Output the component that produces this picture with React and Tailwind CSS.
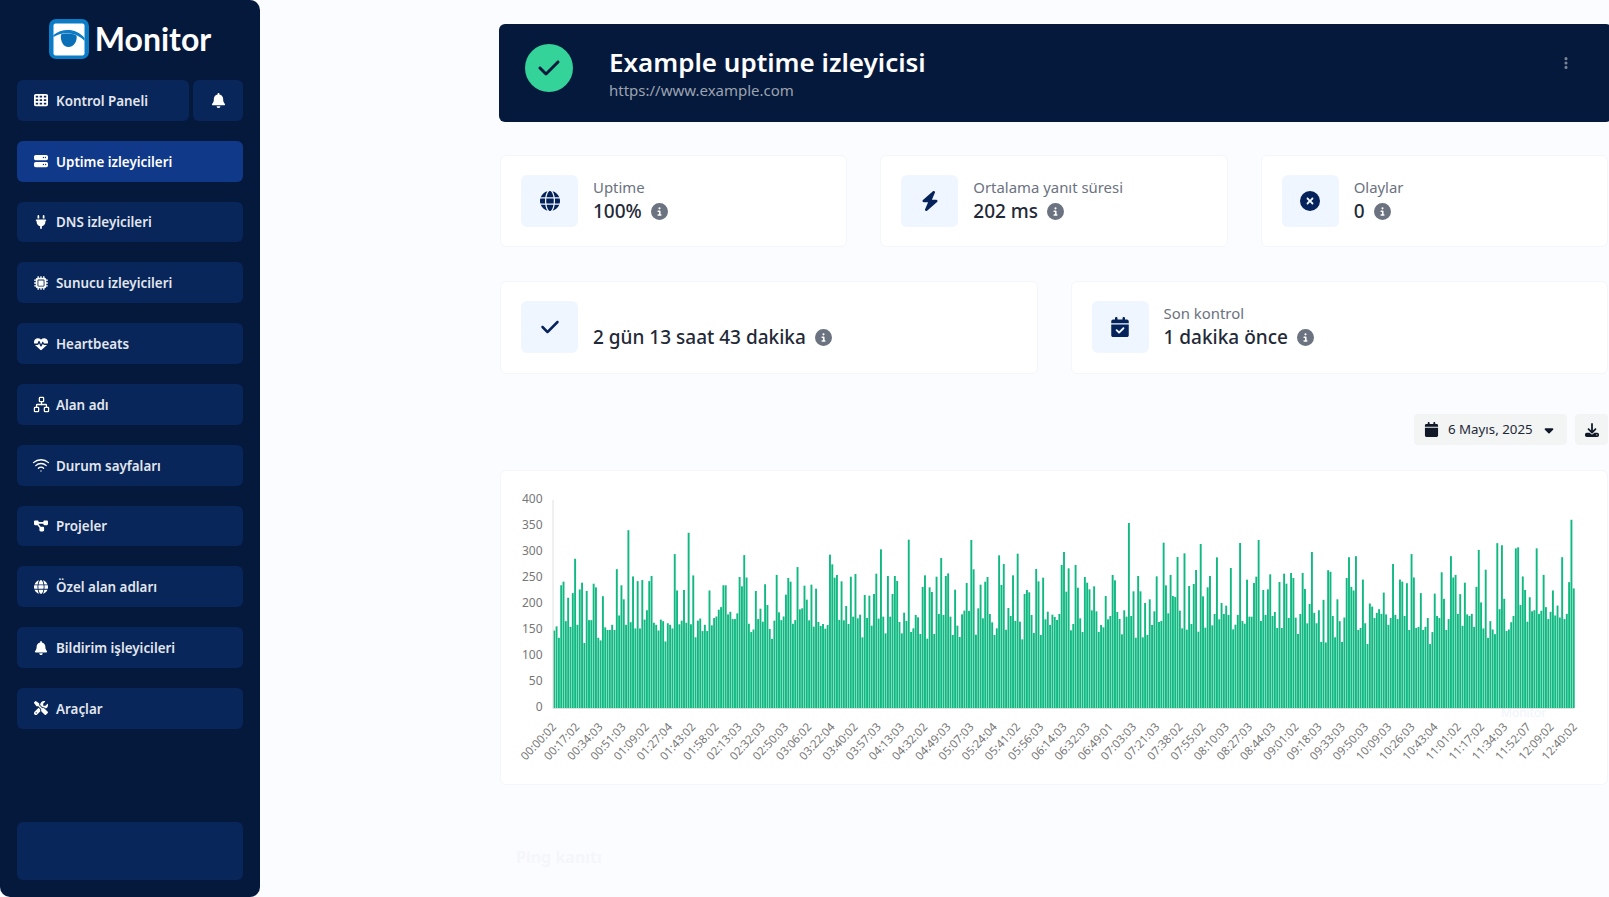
import {
  FaTableCells,
  FaBell,
  FaServer,
  FaPlug,
  FaMicrochip,
  FaHeartPulse,
  FaDiagramProject,
  FaGlobe,
  FaScrewdriverWrench,
  FaCheck,
  FaBolt,
  FaCircleXmark,
  FaCircleInfo,
  FaCalendarCheck,
  FaCalendar,
  FaCaretDown,
  FaDownload,
  FaEllipsisVertical,
} from "react-icons/fa6";
import { Network, Wifi } from "lucide-react";

const menu = [
  { label: "Uptime izleyicileri", icon: <FaServer />, active: true },
  { label: "DNS izleyicileri", icon: <FaPlug /> },
  { label: "Sunucu izleyicileri", icon: <FaMicrochip /> },
  { label: "Heartbeats", icon: <FaHeartPulse /> },
  { label: "Alan adı", icon: <Network size={17} strokeWidth={1.8} /> },
  { label: "Durum sayfaları", icon: <Wifi size={18} strokeWidth={1.7} /> },
  { label: "Projeler", icon: <FaDiagramProject /> },
  { label: "Özel alan adları", icon: <FaGlobe /> },
  { label: "Bildirim işleyicileri", icon: <FaBell /> },
  { label: "Araçlar", icon: <FaScrewdriverWrench /> },
];

const ticks = [
  "00:00:02", "00:17:02", "00:34:03", "00:51:03", "01:09:02", "01:27:04", "01:43:02", "01:58:02", "02:13:03",
  "02:32:03", "02:50:03", "03:06:02", "03:22:04", "03:40:02", "03:57:03", "04:13:03", "04:32:02", "04:49:03",
  "05:07:03", "05:24:04", "05:41:02", "05:56:03", "06:14:03", "06:32:03", "06:49:01", "07:03:03", "07:21:03",
  "07:38:02", "07:55:02", "08:10:03", "08:27:03", "08:44:03", "09:01:02", "09:18:03", "09:33:03", "09:50:03",
  "10:09:03", "10:26:03", "10:43:04", "11:01:02", "11:17:02", "11:34:03", "11:52:07", "12:09:02", "12:40:02",
];

// response times, ms
const pingsStart = [
  149, 157, 135, 236, 243, 167, 212, 156, 221, 287, 160, 228, 241, 125, 225, 169, 169, 239, 232, 135, 130, 215, 155,
  150, 150, 160, 150, 267, 178, 236, 209, 160, 342, 165, 253, 153, 244, 153, 246, 170, 188, 244, 254, 164, 160, 149,
  170, 167, 128, 163, 160, 153, 296, 226, 161, 168, 227, 164, 337, 161, 255, 136, 168, 172, 148, 160, 148, 226, 159,
  173, 176, 189, 194, 236, 236, 180, 185, 171, 171, 182, 252, 234, 294, 251, 162, 146, 151, 225, 171, 191, 166, 238,
  198, 152, 133, 168, 256, 184, 169, 176, 218, 250, 243, 162, 169, 271,
];

// middle part kept as bar tops in a 3x crop, baseline 624
const pingsMiddle = [
  328, 325, 257, 299, 361, 254, 380, 266, 366, 378, 372, 386, 375, 164, 193, 233, 225, 360, 244, 361, 318, 372, 230,
  350, 222, 355, 344, 412, 285, 354, 287, 377, 282, 221, 356, 148, 350, 400, 228, 350, 282, 228, 243, 366, 400, 338,
  363, 119, 396, 385, 345, 352, 402, 261, 226, 416, 262, 276, 402, 230, 342, 174, 345, 228, 220, 350, 405, 269, 377,
  411, 343, 332, 249, 333, 120, 208, 404, 325, 254, 355, 245, 231, 342, 367, 405, 385, 166, 255, 192, 389, 324, 348,
  226, 363, 161, 365, 418, 282, 270, 277, 345, 399, 207, 244, 405, 233, 358, 335, 375, 344, 351, 360, 342, 195, 156,
  275, 205, 391, 372, 195, 263, 355, 396, 231, 248, 268, 331, 259, 334, 396, 375, 382, 288, 358, 348, 225, 241, 336,
  357, 403, 331, 350, 69, 348, 274, 413, 228, 274, 412, 309, 405, 298, 375, 334, 229, 366, 363, 128, 256, 340, 225,
  288, 291, 171, 332, 385, 160, 389, 258, 372, 252, 210, 395, 132, 289, 383, 262, 228, 376, 342, 172, 358, 309, 342,
  317, 345, 204, 388, 374, 345, 129, 363, 371, 239, 350, 350, 249, 230, 120, 363, 270, 345, 268, 223, 348, 336, 384,
  246, 384, 221, 251, 354, 219, 234, 353, 402, 342, 219, 267, 370, 312,
].map((top) => (624 - top) / 1.56);

const pingsEnd = [
  300, 183, 163, 188, 127, 208, 126, 265, 262, 177, 136, 209, 167, 127, 174, 250, 290, 233, 226, 292, 150, 154, 247,
  163, 123, 201, 195, 173, 183, 190, 181, 222, 180, 160, 173, 277, 179, 171, 247, 243, 177, 240, 150, 296, 251, 154,
  156, 221, 150, 156, 173, 123, 146, 220, 177, 173, 261, 210, 150, 171, 292, 251, 256, 181, 219, 158, 241, 180, 177,
  181, 156, 233, 304, 203, 153, 266, 135, 167, 151, 142, 317, 190, 313, 210, 148, 151, 165, 177, 307, 309, 198, 253,
  227, 166, 213, 186, 188, 307, 181, 187, 256, 194, 171, 185, 226, 178, 197, 174, 290, 171, 181, 242, 362, 230,
];

const pings = [...pingsStart, ...pingsMiddle, ...pingsEnd];

function Logo() {
  return (
    <div className="flex items-start justify-center gap-[6px] h-[80px] pt-[19px]">
      <svg width="40" height="40" viewBox="0 0 40 40">
        <rect width="40" height="40" rx="7" fill="#0b7cc5" />
        <rect x="4.5" y="4.5" width="31" height="32" rx="2" fill="#ffffff" />
        <path d="M4.5 16 C12 9.5 27 8 35.5 19 L35.5 22 C27 12.5 13 12.5 4.5 18 Z" fill="#0b7cc5" />
        <path d="M12 15.5 C16 14 23 14 27.5 16.5 C28.5 22 25 28 19.5 28 C14 28 11 21.5 12 15.5 Z" fill="#0b6fb8" />
      </svg>
      <span className="font-['Lato'] font-bold text-[32px] leading-[40px] text-white">Monitor</span>
    </div>
  );
}

function NavButton({ label, icon, active }) {
  return (
    <div
      className={`flex items-center h-[40.8px] rounded-[6px] pl-[15px] gap-[6px] text-[13.4px] font-semibold ${
        active ? "bg-[#10398a] text-white" : "bg-[#08265a] text-[#e2e6ee]"
      }`}
    >
      <span className="w-[18px] flex justify-center text-[14px] text-white">{icon}</span>
      <span className="pt-px">{label}</span>
    </div>
  );
}

function Sidebar() {
  return (
    <aside className="w-[260px] shrink-0 h-full flex flex-col bg-[#05193d] rounded-tr-[10px] rounded-br-[10px] rounded-bl-[10px] px-[17px] pb-[17px]">
      <Logo />
      <div className="flex gap-[4px]">
        <div className="flex-1">
          <NavButton label="Kontrol Paneli" icon={<FaTableCells />} />
        </div>
        <div className="w-[50px] h-[40.8px] rounded-[6px] bg-[#08265a] flex items-center justify-center text-white text-[15px]">
          <FaBell />
        </div>
      </div>
      <nav className="flex flex-col gap-[20px] mt-[20px]">
        {menu.map((item) => (
          <NavButton key={item.label} {...item} />
        ))}
      </nav>
      <div className="mt-auto h-[58px] rounded-[6px] bg-[#08265a]"></div>
    </aside>
  );
}

function StatCard({ icon, label, value }) {
  return (
    <div className="h-[92.5px] flex items-center gap-[15px] px-[20px] bg-white rounded-[6px] border border-[#f4f6f9]">
      <div className="w-[57px] h-[52px] rounded-[6px] bg-[#eff6ff] flex items-center justify-center text-[#05225a] text-[20px]">
        {icon}
      </div>
      <div className="h-[52px]">
        <div className="h-[24px] text-[14.9px] leading-[24px] text-[#6b7280]">{label}</div>
        <div className="flex items-center gap-[9px] text-[19px] leading-[25px] font-medium text-[#1f2937]">
          {value}
          <FaCircleInfo className="text-[17px] text-[#6b7280]" />
        </div>
      </div>
    </div>
  );
}

function PingChart() {
  const step = 1019.5 / (pings.length - 1);
  return (
    <svg viewBox="0 0 1106 313" className="block w-full h-full">
      {[0, 50, 100, 150, 200, 250, 300, 350, 400].map((v) => (
        <text key={v} x="41.5" y={237 - v * 0.52 + 2.8} textAnchor="end" className="fill-[#777777] text-[12px]">
          {v}
        </text>
      ))}
      <text x="1000" y="246" className="fill-[#eef4fb] text-[12px]">Monitor</text>
      {pings.map((v, i) => (
        <rect key={i} x={52.3 + i * step} y={237 - v * 0.52} width="1.9" height={v * 0.52} fill="#10b981" />
      ))}
      <line x1="52" y1="29" x2="52" y2="237.5" stroke="#e0e0e0" />
      <line x1="52" y1="237.5" x2="1073" y2="237.5" stroke="#e0e0e0" />
      {ticks.map((t, i) => {
        const x = 56 + i * 23.2;
        return (
          <text
            key={t}
            x={x}
            y="256.5"
            textAnchor="end"
            transform={`rotate(-47 ${x} 256.5)`}
            className="fill-[#777777] text-[11.5px]"
          >
            {t}
          </text>
        );
      })}
    </svg>
  );
}

function App() {
  return (
    <div className="flex h-screen overflow-hidden bg-[#fbfcff] font-['Noto_Sans',sans-serif]">
      <Sidebar />
      <main className="flex-1 min-w-0 pl-[240px] pr-px pt-[24px]">
        <header className="-ml-[1px] -mr-[4px] h-[98px] flex items-start bg-[#05193d] rounded-[6px] pl-[26px] pr-[39px] pt-[20px]">
          <div className="w-[48px] h-[48px] rounded-full bg-[#34d399] flex items-center justify-center text-[#05193d] text-[24px]">
            <FaCheck />
          </div>
          <div className="ml-[36px] flex-1">
            <div className="text-[26px] leading-[36px] font-semibold text-white">Example uptime izleyicisi</div>
            <div className="text-[15px] leading-[20px] text-[#9ca3af]">https://www.example.com</div>
          </div>
          <FaEllipsisVertical className="mt-[12px] text-[14px] text-[#7b8494]" />
        </header>

        <div className="grid grid-cols-3 gap-[33px] mt-[32.5px]">
          <StatCard icon={<FaGlobe />} label="Uptime" value="100%" />
          <StatCard icon={<FaBolt />} label="Ortalama yanıt süresi" value="202 ms" />
          <StatCard icon={<FaCircleXmark />} label="Olaylar" value="0" />
        </div>

        <div className="grid grid-cols-2 gap-[33px] mt-[34px]">
          <StatCard icon={<FaCheck />} label="" value="2 gün 13 saat 43 dakika" />
          <StatCard icon={<FaCalendarCheck />} label="Son kontrol" value="1 dakika önce" />
        </div>

        <div className="flex justify-end gap-[8px] mt-[40.5px] h-[31px]">
          <div className="w-[153px] flex items-center pl-[10px] gap-[9px] rounded-[4px] bg-[#f3f5f5] text-[13.3px] text-[#1f2937]">
            <FaCalendar className="text-[15px] text-[#111827]" />
            <span>6 Mayıs, 2025</span>
            <FaCaretDown className="text-[14px] text-[#111827]" />
          </div>
          <div className="w-[33px] flex items-center justify-center rounded-[4px] bg-[#f3f5f5] text-[14px] text-[#111827]">
            <FaDownload />
          </div>
        </div>

        <div className="mt-[25px] h-[315px] bg-white rounded-[6px] border border-[#f4f6f9]">
          <PingChart />
        </div>

        <div className="mt-[50px] h-[120px] rounded-[6px] pl-[16px] pt-[10px] text-[16px] font-bold text-[#f5f6fa]">
          Ping kanıtı
        </div>
      </main>
    </div>
  );
}

export default App;
